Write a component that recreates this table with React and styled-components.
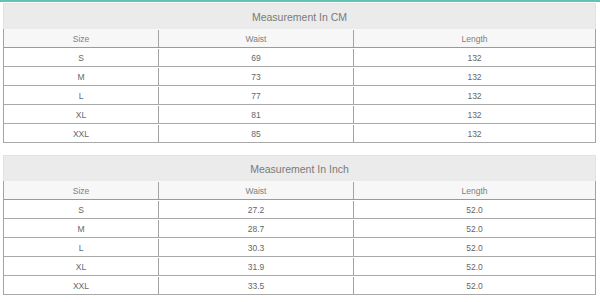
import styled, { createGlobalStyle } from "styled-components";

const GlobalStyle = createGlobalStyle`
  html, body {
    margin: 0;
    padding: 0;
    background: #fff;
  }
  body {
    font-family: "Liberation Sans", Arial, sans-serif;
  }
`;

const tables = [
  {
    title: "Measurement In CM",
    rows: [
      ["S", "69", "132"],
      ["M", "73", "132"],
      ["L", "77", "132"],
      ["XL", "81", "132"],
      ["XXL", "85", "132"],
    ],
  },
  {
    title: "Measurement In Inch",
    rows: [
      ["S", "27.2", "52.0"],
      ["M", "28.7", "52.0"],
      ["L", "30.3", "52.0"],
      ["XL", "31.9", "52.0"],
      ["XXL", "33.5", "52.0"],
    ],
  },
];

const SizeChart = ({ title, rows }) => {
  return (
    <Table>
      <Title>{title}</Title>
      <Body>
        <Row $head>
          <Cell>Size</Cell>
          <Cell>Waist</Cell>
          <Cell>Length</Cell>
        </Row>
        {rows.map((row, index) => (
          <Row key={index}>
            {row.map((val, i) => (
              <Cell key={i}>{val}</Cell>
            ))}
          </Row>
        ))}
      </Body>
    </Table>
  );
};

const App = () => {
  return (
    <>
      <GlobalStyle />
      <Page>
        {tables.map((t, index) => (
          <SizeChart key={index} title={t.title} rows={t.rows} />
        ))}
      </Page>
    </>
  );
};

const Page = styled.div`
  border-top: 2px solid #62c2b3;
  padding: 1px 4px 0 3px;
  display: flex;
  flex-direction: column;
  gap: 12px;
`;

const Table = styled.section`
  width: 593px;
`;

const Title = styled.div`
  height: 26px;
  padding-top: 1px;
  box-sizing: border-box;
  background: #ebebeb;
  border: 1px solid #e2e2e2;
  border-bottom: none;
  display: flex;
  align-items: center;
  justify-content: center;
  font-size: 10.5px;
  color: #7a7a7a;
`;

const Body = styled.div`
  border-left: 1px solid #a3a3a3;
  border-right: 1px solid #a3a3a3;
`;

const Row = styled.div`
  display: grid;
  grid-template-columns: 155px 195px 1fr;
  height: 19px;
  padding-top: 1px;
  box-sizing: border-box;
  border-bottom: 1px solid ${({ $head }) => ($head ? "#9a9a9a" : "#a8a8a8")};
  background: ${({ $head }) => ($head ? "#f7f7f7" : "#fff")};
  color: ${({ $head }) => ($head ? "#808080" : "#666")};
`;

const Cell = styled.div`
  display: flex;
  align-items: center;
  justify-content: center;
  font-size: 8.5px;
  box-sizing: border-box;
  border-right: 1px solid #a3a3a3;

  &:last-child {
    border-right: none;
  }
`;

export default App;
